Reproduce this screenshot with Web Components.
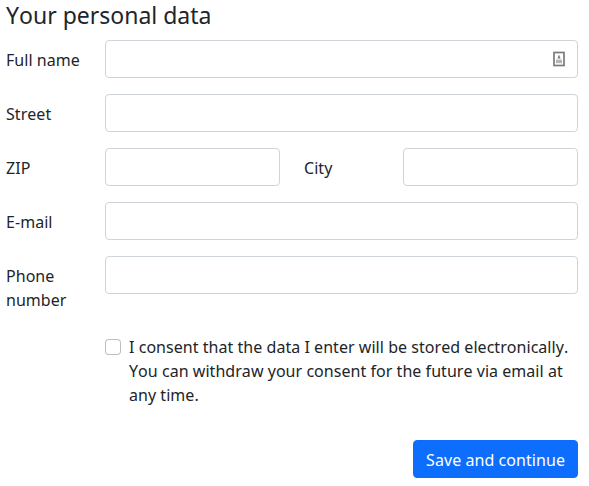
<!DOCTYPE html>
<html>
<head>
<meta charset="utf-8">
<title>Your personal data</title>
<style>
  html, body { margin: 0; background: #fff; }
  body { font: 16px/24px "Noto Sans", sans-serif; color: #212529; font-kerning: none; letter-spacing: .04px; }
</style>
</head>
<body>
<data-form heading="Your personal data">
  <form-row label="Full name"><text-field icon></text-field></form-row>
  <form-row label="Street"><text-field></text-field></form-row>
  <form-row label="ZIP">
    <text-field></text-field>
    <inline-label>City</inline-label>
    <text-field></text-field>
  </form-row>
  <form-row label="E-mail"><text-field></text-field></form-row>
  <form-row label="Phone number"><text-field></text-field></form-row>
  <consent-box>I consent that the data I enter will be stored electronically. You can withdraw your consent for the future via email at any time.</consent-box>
  <save-button>Save and continue</save-button>
</data-form>

<script>
  class DataForm extends HTMLElement {
    connectedCallback() {
      const shadow = this.attachShadow({ mode: 'open' });
      shadow.innerHTML = `
        <style>
          :host { display: block; padding: 0 11px 0 6px; }
          h2 {
            margin: 0 0 10px;
            font-size: 23px;
            line-height: 30px;
            font-weight: 400;
            letter-spacing: 0;
          }
        </style>
        <h2>${this.getAttribute('heading')}</h2>
        <slot></slot>
      `;
    }
  }

  class FormRow extends HTMLElement {
    connectedCallback() {
      const shadow = this.attachShadow({ mode: 'open' });
      shadow.innerHTML = `
        <style>
          :host { display: flex; margin-bottom: 16px; }
          label { flex: 0 0 99px; padding: 8px 24px 0 0; box-sizing: border-box; }
          .fields { flex: 1; display: flex; min-width: 0; }
        </style>
        <label>${this.getAttribute('label')}</label>
        <div class="fields"><slot></slot></div>
      `;
    }
  }

  class TextField extends HTMLElement {
    connectedCallback() {
      const shadow = this.attachShadow({ mode: 'open' });
      const icon = this.hasAttribute('icon') ? `
        <svg width="12" height="16" viewBox="0 0 12 16">
          <rect x="1" y="1.5" width="10" height="13" fill="#fff" stroke="#7a7a7a" stroke-width="1.7"/>
          <path d="M6 3.4 7.6 7.6H4.4z" fill="#808080"/>
          <path d="M3 8.6h6v3.6H3z" fill="#b4b4b4"/>
        </svg>` : '';
      shadow.innerHTML = `
        <style>
          :host { display: block; flex: 1; min-width: 0; position: relative; }
          input {
            display: block;
            width: 100%;
            height: 38px;
            box-sizing: border-box;
            padding: 6px 12px;
            border: 1px solid #ced4da;
            border-radius: 4px;
            background: #fff;
            font: inherit;
            outline: none;
          }
          svg { position: absolute; right: 13px; top: 11px; }
        </style>
        <input type="text">
        ${icon}
      `;
    }
  }

  class InlineLabel extends HTMLElement {
    connectedCallback() {
      const shadow = this.attachShadow({ mode: 'open' });
      shadow.innerHTML = `
        <style>
          :host { display: block; flex: 0 0 123px; box-sizing: border-box; padding: 8px 0 0 24px; }
        </style>
        <slot></slot>
      `;
    }
  }

  class ConsentBox extends HTMLElement {
    connectedCallback() {
      const shadow = this.attachShadow({ mode: 'open' });
      shadow.innerHTML = `
        <style>
          :host { display: flex; gap: 8px; margin: 23px 0 0 99px; }
          input {
            appearance: none;
            flex: none;
            width: 16px;
            height: 16px;
            margin: 4px 0 0;
            border: 1px solid rgba(0,0,0,.25);
            border-radius: 4px;
            background: #fff;
          }
          div { flex: 1; }
        </style>
        <input type="checkbox">
        <div><slot></slot></div>
      `;
    }
  }

  class SaveButton extends HTMLElement {
    connectedCallback() {
      const shadow = this.attachShadow({ mode: 'open' });
      shadow.innerHTML = `
        <style>
          :host { display: flex; justify-content: flex-end; margin-top: 33px; }
          button {
            height: 38px;
            padding: 7px 12px 5px;
            border: 1px solid #0d6efd;
            border-radius: 4px;
            background: #0d6efd;
            color: #fff;
            font: inherit;
            font-kerning: none;
            letter-spacing: .06px;
          }
        </style>
        <button type="button"><slot></slot></button>
      `;
    }
  }

  customElements.define('data-form', DataForm);
  customElements.define('form-row', FormRow);
  customElements.define('text-field', TextField);
  customElements.define('inline-label', InlineLabel);
  customElements.define('consent-box', ConsentBox);
  customElements.define('save-button', SaveButton);
</script>
</body>
</html>
